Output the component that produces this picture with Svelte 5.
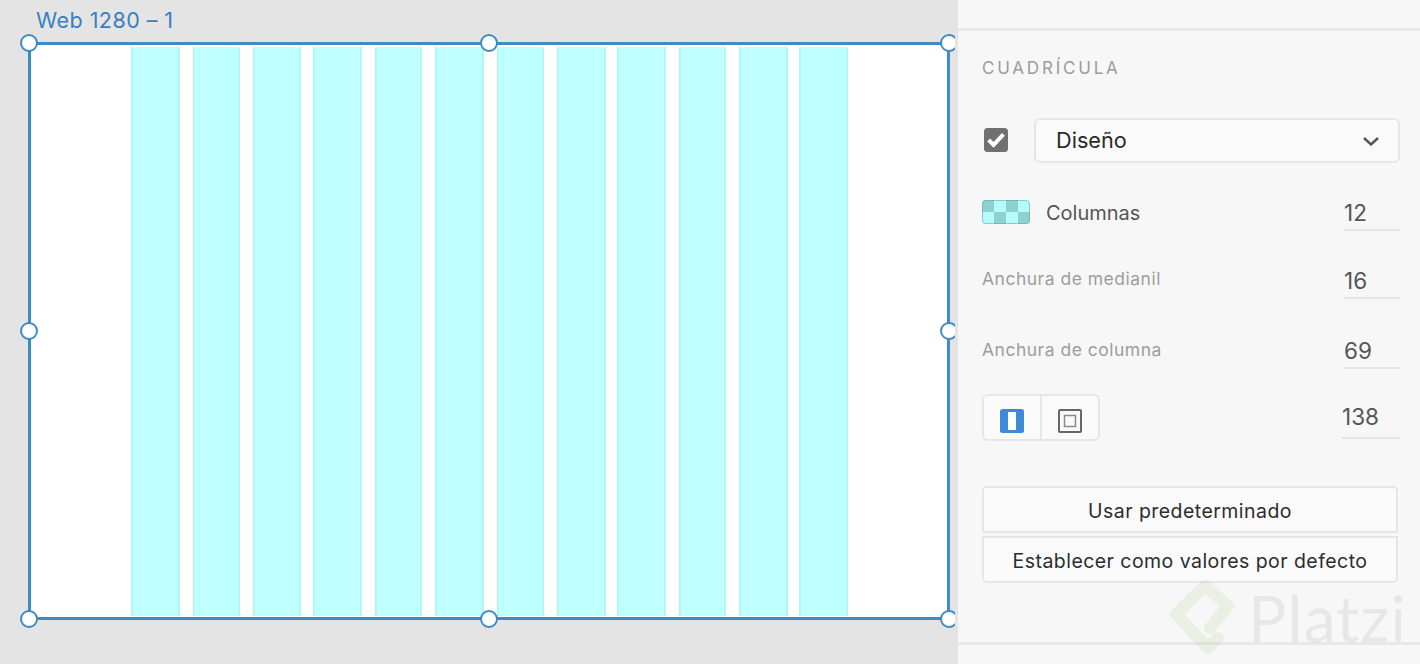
<script lang="ts">
	// column x ranges on the artboard, as drawn by the app (rounded to screen pixels)
	const columns = [
		[131, 180], [193, 240], [253, 301], [313, 362], [375, 422], [435, 484],
		[497, 544], [557, 606], [617, 666], [679, 726], [739, 788], [799, 848],
	];
	const gridLeft = 28;
	const placed = columns.map(([start, end], i) => ({
		width: end - start,
		gap: start - (i === 0 ? gridLeft + 3 : columns[i - 1][1]),
	}));

	const handles = [
		[0, 0], [460, 0], [920, 0],
		[0, 288], [920, 288],
		[0, 576], [460, 576], [920, 576],
	];

	const swatch = [1, 0, 1, 0, 0, 1, 0, 1];
</script>

<div class="screen">
	<section class="canvas">
		<div class="artboard-title">Web 1280 – 1</div>
		<div class="artboard">
			{#each placed as col}
				<div class="col" style="width: {col.width}px; margin-left: {col.gap}px"></div>
			{/each}
		</div>
		{#each handles as [x, y]}
			<span class="handle" class:cut={x === 920} style="left: {x + 20}px; top: {y + 34}px"></span>
		{/each}
	</section>

	<aside class="panel">
		<div class="strip"></div>
		<div class="body">
			<h2>CUADRÍCULA</h2>

			<div class="select-row">
				<span class="checkbox">
					<svg width="24" height="24" viewBox="0 0 24 24">
						<rect width="24" height="24" rx="3.5" fill="#707070" />
						<path d="M4.6 12l5 4.8 9.8-10.4" fill="none" stroke="#fff" stroke-width="4" />
					</svg>
				</span>
				<div class="select">
					<span>Diseño</span>
					<svg width="18" height="10" viewBox="0 0 18 10">
						<path d="M2 2l7 6.5L16 2" fill="none" stroke="#555" stroke-width="2.4" />
					</svg>
				</div>
			</div>

			<div class="field columns-row">
				<div class="swatch">
					{#each swatch as dark}
						<i class:dark={dark === 1}></i>
					{/each}
				</div>
				<span class="name">Columnas</span>
				<span class="value">12</span>
			</div>

			<div class="field gutter-row">
				<span class="label">Anchura de medianil</span>
				<span class="value">16</span>
			</div>

			<div class="field width-row">
				<span class="label">Anchura de columna</span>
				<span class="value">69</span>
			</div>

			<div class="field margin-row">
				<div class="segmented">
					<button aria-label="Columnas">
						<svg width="24" height="24" viewBox="0 0 24 24">
							<rect width="24" height="24" rx="2.5" fill="#3f8ad8" />
							<rect x="8" y="3" width="8" height="18" fill="#fff" />
						</svg>
					</button>
					<button aria-label="Márgenes">
						<svg width="24" height="24" viewBox="0 0 24 24">
							<rect x="1" y="1" width="22" height="22" rx="1" fill="none" stroke="#666" stroke-width="2" />
							<rect x="6.5" y="6.5" width="11" height="11" fill="none" stroke="#8a8a8a" stroke-width="1.5" />
						</svg>
					</button>
				</div>
				<span class="value wide">138</span>
			</div>

			<div class="actions">
				<button>Usar predeterminado</button>
				<button>Establecer como valores por defecto</button>
			</div>
		</div>
		<div class="foot"></div>
	</aside>

	<div class="watermark">
		<svg width="70" height="80" viewBox="0 0 70 80">
			<path d="M42 50L60 28 37 8 8 36l32 34 10-10" fill="none" stroke="#7fa020" stroke-width="12" stroke-linejoin="round" stroke-linecap="round" />
		</svg>
		<span>Platzi</span>
	</div>
</div>

<style>
	:global(body) {
		margin: 0;
		background: #e4e4e4;
	}

	.screen {
		position: relative;
		display: flex;
		width: 1420px;
		height: 664px;
		overflow: hidden;
		font-family: Inter, 'Liberation Sans', sans-serif;
	}

	/* --- Canvas --- */

	.canvas {
		position: relative;
		width: 958px;
		flex: none;
		padding: 9px 0 0 36px;
		box-sizing: border-box;
		background: #e4e4e4;
	}

	.artboard-title {
		height: 22px;
		line-height: 22px;
		font-size: 21.5px;
		letter-spacing: 0.45px;
		color: #3a7fc2;
	}

	.artboard {
		position: absolute;
		left: 28px;
		top: 42px;
		width: 922px;
		height: 578px;
		box-sizing: border-box;
		display: flex;
		border: 3px solid #3d8cc6;
		background: #fff;
	}

	.col {
		flex: none;
		height: 569px;
		box-sizing: border-box;
		background: #bfffff;
		border: 0 solid #aef8f8;
		border-width: 0 2px;
		margin-top: 2px;
	}

	.handle {
		position: absolute;
		width: 18px;
		height: 18px;
		box-sizing: border-box;
		border: 2.8px solid #3d8cc6;
		border-radius: 50%;
		background: #fff;
	}

	.handle.cut {
		clip-path: inset(0 3px 0 0);
	}

	/* --- Panel --- */

	.panel {
		position: relative;
		z-index: 1;
		flex: 1;
		display: flex;
		flex-direction: column;
		background: #f7f7f7;
	}

	.strip {
		height: 28px;
		flex: none;
		border-bottom: 3px solid #e8e8e8;
	}

	.body {
		height: 611px;
		flex: none;
		box-sizing: border-box;
		padding: 0 20px 0 24px;
	}

	.foot {
		flex: 1;
		border-top: 3px solid #e8e8e8;
	}

	h2 {
		margin: 27px 0 0;
		height: 20px;
		line-height: 20px;
		font-size: 17px;
		font-weight: 400;
		letter-spacing: 2.8px;
		color: #9b9b9b;
	}

	.select-row {
		display: flex;
		align-items: center;
		gap: 26px;
		margin-top: 40px;
		padding-left: 2px;
	}

	.checkbox {
		display: block;
		height: 24px;
		margin-top: -2px;
	}

	.select {
		flex: 1;
		height: 45px;
		box-sizing: border-box;
		display: flex;
		align-items: center;
		justify-content: space-between;
		padding: 0 18px 2px 20px;
		border: 2px solid #e6e6e6;
		border-radius: 6px;
		background: #fafafa;
		font-size: 21.7px;
		color: #2a2a2a;
	}

	.select svg {
		margin-top: 3px;
	}

	.field {
		position: relative;
		display: flex;
		align-items: center;
		justify-content: space-between;
	}

	.columns-row {
		justify-content: flex-start;
		height: 30px;
		margin-top: 35px;
	}

	.gutter-row {
		height: 30px;
		margin-top: 39px;
	}

	.width-row {
		height: 30px;
		margin-top: 40px;
	}

	.margin-row {
		height: 47px;
		margin-top: 27px;
	}

	.swatch {
		display: grid;
		grid-template-columns: repeat(4, 12px);
		grid-template-rows: repeat(2, 12px);
		border-radius: 4px;
		overflow: hidden;
		outline: 1px solid rgba(90, 165, 165, 0.55);
		outline-offset: -1px;
		margin: -2px 16px 0 0;
	}

	.swatch i {
		background: #b6fbfb;
	}

	.swatch i.dark {
		background: #8fd0d0;
	}

	.name {
		font-size: 20px;
		color: #555;
	}

	.label {
		font-size: 17.5px;
		letter-spacing: 0.5px;
		color: #9d9d9d;
		margin-top: -6px;
	}

	.gutter-row .label {
		margin-top: -8px;
	}

	.value {
		align-self: flex-start;
		width: 56px;
		height: 32px;
		box-sizing: border-box;
		margin-left: auto;
		padding-top: 2px;
		border-bottom: 2px solid #e4e4e4;
		font-size: 22.5px;
		line-height: 24px;
		color: #555;
	}

	.columns-row .value {
		height: 33px;
		padding-top: 3px;
	}

	.value.wide {
		width: 58px;
		padding-top: 13px;
		height: 45px;
		line-height: 20px;
	}

	.segmented {
		display: flex;
		width: 118px;
		height: 47px;
		box-sizing: border-box;
		border: 2px solid #e6e6e6;
		border-radius: 6px;
		background: #fafafa;
	}

	.segmented button {
		flex: 1;
		display: flex;
		align-items: center;
		justify-content: center;
		padding: 6px 0 0;
		border: none;
		background: none;
	}

	.segmented button + button {
		border-left: 2px solid #e6e6e6;
	}

	.actions {
		display: flex;
		flex-direction: column;
		gap: 3px;
		width: 416px;
		margin-top: 45px;
	}

	.actions button {
		height: 47px;
		padding: 2px 0 0;
		box-sizing: border-box;
		border: 2px solid #e6e6e6;
		border-radius: 5px;
		background: #fafafa;
		font-family: inherit;
		font-size: 19.5px;
		letter-spacing: 0.45px;
		color: #2c2c2c;
	}

	.actions button:first-child {
		border-bottom-left-radius: 0;
		border-bottom-right-radius: 0;
	}

	.actions button:last-child {
		border-top-left-radius: 0;
		border-top-right-radius: 0;
	}

	/* --- Watermark --- */

	.watermark {
		position: absolute;
		z-index: 2;
		left: 1168px;
		top: 578px;
		display: flex;
		align-items: center;
		gap: 10px;
		pointer-events: none;
	}

	.watermark svg {
		opacity: 0.09;
	}

	.watermark span {
		font-family: Lato, 'Noto Sans', sans-serif;
		font-size: 64px;
		letter-spacing: 1.2px;
		line-height: 80px;
		color: #000;
		opacity: 0.06;
	}
</style>
